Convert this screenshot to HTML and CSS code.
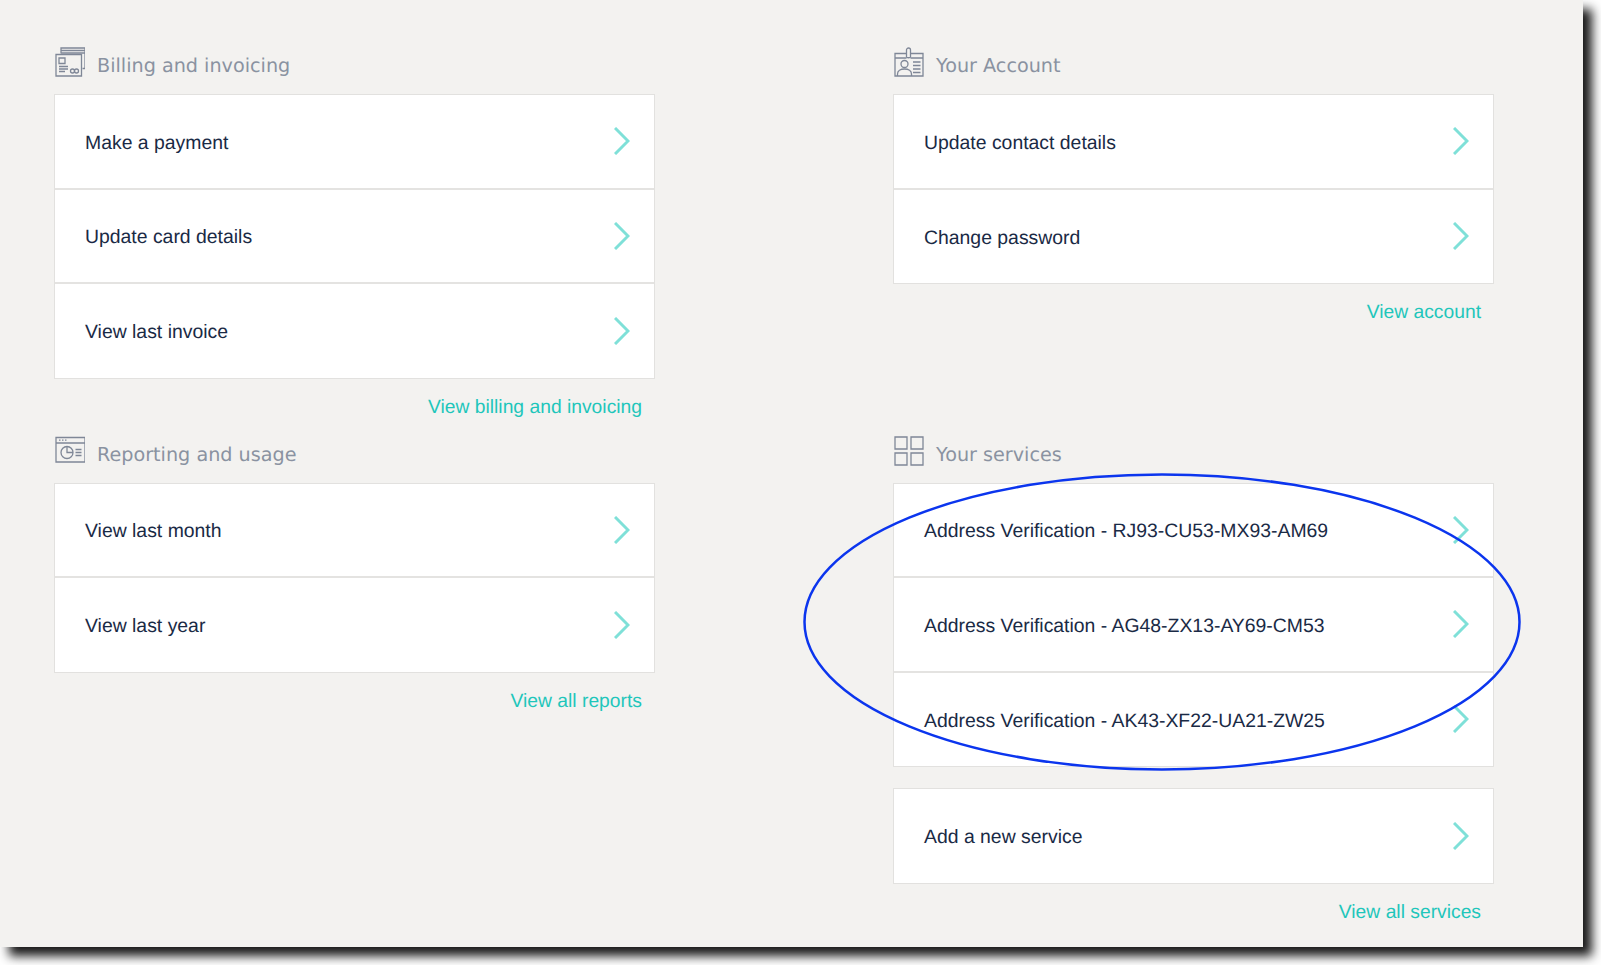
FILE: index.html
```html
<!DOCTYPE html>
<html lang="en">
<head>
<meta charset="utf-8">
<title>Dashboard</title>
<link rel="stylesheet" href="styles.css">
</head>
<body>
<main class="page">
  <section class="section">
    <h2 class="head">
      <svg class="icon" viewBox="0 0 30 30" fill="none"><path d="M6 6.500V1h24v20.500h-2.500M6 3.500h24M6 6h24"/><path d="M1 7.500h25.500V29H1z"/><path d="M4 11h6v5.500H4zM4 19.500h9M4 22h9M4 24.500h6"/><circle cx="17.500" cy="24" r="2"/><circle cx="21.500" cy="24" r="2"/></svg>
      <span>Billing and invoicing</span>
    </h2>
    <div class="card">
      <a class="row"><span>Make a payment</span><svg class="chev" viewBox="0 0 16 28"><path d="M1 1l13 13L1 27"/></svg></a>
      <a class="row"><span>Update card details</span><svg class="chev" viewBox="0 0 16 28"><path d="M1 1l13 13L1 27"/></svg></a>
      <a class="row"><span>View last invoice</span><svg class="chev" viewBox="0 0 16 28"><path d="M1 1l13 13L1 27"/></svg></a>
    </div>
    <a class="more">View billing and invoicing</a>
  </section>

  <section class="section">
    <h2 class="head">
      <svg class="icon" viewBox="0 0 30 30" fill="none"><path d="M12.500 6.500H1V29h28V6.500H16.500M1 11h11.500M16.500 11H29"/><path d="M12.500 10V3a2 2 0 0 1 4 0v7c0 1-4 1-4 0z"/><circle cx="10.500" cy="17" r="3.500"/><path d="M3.500 29v-2c0-3 3-5 7-5s7 2 7 5v2M19 15h7.500M19 18.500h7.500M19 22h7.500M19 25.500h7.500"/></svg>
      <span>Your Account</span>
    </h2>
    <div class="card">
      <a class="row"><span>Update contact details</span><svg class="chev" viewBox="0 0 16 28"><path d="M1 1l13 13L1 27"/></svg></a>
      <a class="row"><span>Change password</span><svg class="chev" viewBox="0 0 16 28"><path d="M1 1l13 13L1 27"/></svg></a>
    </div>
    <a class="more">View account</a>
  </section>

  <section class="section">
    <h2 class="head">
      <svg class="icon" viewBox="0 0 30 30" fill="none"><path d="M1 1.500h29V26H1zM1 7h29"/><path d="M4 4.200h1.500M7 4.200h1.500M10 4.200h1.500"/><circle cx="12" cy="16.500" r="6"/><path d="M12 10.500v6h6M20.500 13.500h6M20.500 16.500h6M20.500 19.500h6"/></svg>
      <span>Reporting and usage</span>
    </h2>
    <div class="card">
      <a class="row"><span>View last month</span><svg class="chev" viewBox="0 0 16 28"><path d="M1 1l13 13L1 27"/></svg></a>
      <a class="row"><span>View last year</span><svg class="chev" viewBox="0 0 16 28"><path d="M1 1l13 13L1 27"/></svg></a>
    </div>
    <a class="more">View all reports</a>
  </section>

  <section class="section">
    <h2 class="head">
      <svg class="icon" viewBox="0 0 30 30" fill="none"><path d="M1 1h12v12H1zM17 1h12v12H17zM1 17h12v12H1zM17 17h12v12H17z"/></svg>
      <span>Your services</span>
    </h2>
    <div class="card">
      <a class="row"><span>Address Verification - RJ93-CU53-MX93-AM69</span><svg class="chev" viewBox="0 0 16 28"><path d="M1 1l13 13L1 27"/></svg></a>
      <a class="row"><span>Address Verification - AG48-ZX13-AY69-CM53</span><svg class="chev" viewBox="0 0 16 28"><path d="M1 1l13 13L1 27"/></svg></a>
      <a class="row"><span>Address Verification - AK43-XF22-UA21-ZW25</span><svg class="chev" viewBox="0 0 16 28"><path d="M1 1l13 13L1 27"/></svg></a>
    </div>
    <div class="card card-gap">
      <a class="row"><span>Add a new service</span><svg class="chev" viewBox="0 0 16 28"><path d="M1 1l13 13L1 27"/></svg></a>
    </div>
    <a class="more">View all services</a>
  </section>

  <svg class="ring" viewBox="0 0 720 300" fill="none"><ellipse cx="360" cy="150" rx="357.500" ry="147.500"/></svg>
</main>
</body>
</html>
```
FILE: styles.css
```css
* { box-sizing: border-box; }
html, body { margin: 0; padding: 0; background: #fff; }
body {
  width: 1601px;
  height: 965px;
  overflow: hidden;
  font-family: "Liberation Sans", Arial, sans-serif;
  text-rendering: geometricPrecision;
}
.page {
  position: relative;
  width: 1583px;
  height: 947px;
  background: #f3f2f0;
  box-shadow: 9px 9px 10px rgba(0, 0, 0, .9);
  padding: 47px 90px 0 54px;
  display: grid;
  grid-template-columns: 601px 601px;
  column-gap: 238px;
  grid-template-rows: 388.500px auto;
  align-content: start;
}
.section { display: flex; flex-direction: column; }
.head {
  display: flex;
  align-items: flex-start;
  gap: 12px;
  height: 47px;
  margin: 0;
  padding-left: 1px;
  font-family: "DejaVu Sans", Verdana, sans-serif;
  font-size: 19.200px;
  font-weight: 400;
  color: #8a92a1;
}
.head span { line-height: 24px; padding-top: 7px; }
.icon { width: 30px; height: 30px; flex: none; stroke: #7f8797; stroke-width: 1.3; }
.card {
  background: #fff;
  border: 1px solid #e2e1df;
  width: 601px;
}
.card-gap { margin-top: 21px; }
.row {
  display: flex;
  align-items: center;
  justify-content: space-between;
  height: 94.500px;
  padding: 0 24px 0 30px;
  color: #1a2a45;
  font-size: 19.400px;
  border-bottom: 2px solid #e4e3e1;
}
.row:last-child { border-bottom: 0; height: 93.500px; }
.row span { position: relative; top: 2px; }
.chev { width: 16px; height: 28px; fill: none; stroke: #7fe0d8; stroke-width: 3; }
.more {
  display: block;
  margin-top: 17px;
  padding-right: 13px;
  text-align: right;
  font-size: 19.300px;
  line-height: 24px;
  color: #1fc6bb;
}
.ring {
  position: absolute;
  left: 802px;
  top: 472px;
  width: 720px;
  height: 300px;
  stroke: #0b35ee;
  stroke-width: 2.500;
}
```
